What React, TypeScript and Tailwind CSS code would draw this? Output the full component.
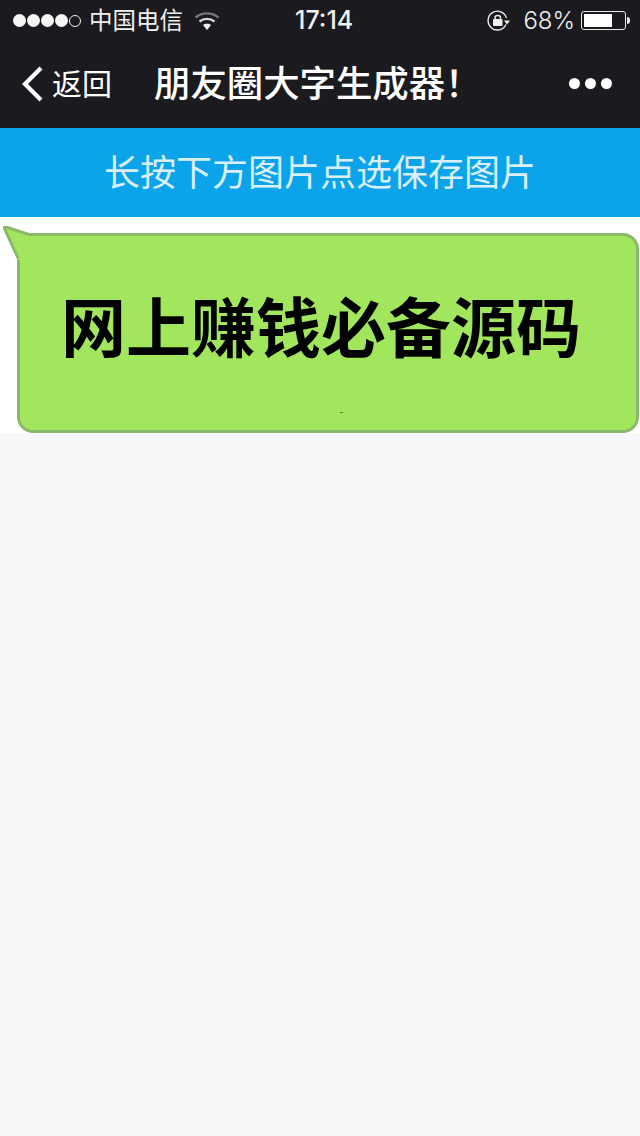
import React from 'react';

const cjk = "font-['Inter','Noto_Sans_CJK_SC',sans-serif]";

function Signal() {
  return (
    <div className="flex items-center gap-[1px]">
      {[0, 1, 2, 3].map((i) => (
        <span key={i} className="w-[13px] h-[13px] rounded-full bg-[#f4f4f4]" />
      ))}
      <span className="w-[12px] h-[12px] rounded-full border border-[#f4f4f4]" />
    </div>
  );
}

function Wifi() {
  return (
    <svg width="26" height="20" viewBox="0 0 26 20" fill="none">
      <path d="M1.5 6.5C8 1 18 1 24.5 6.5" stroke="#77777b" strokeWidth="2.4" />
      <path d="M5.5 10.5C10 7 16 7 20.5 10.5" stroke="#d8d8d8" strokeWidth="2.4" />
      <path d="M9 14C11 12.3 15 12.3 17 14L13 19Z" fill="#f4f4f4" />
    </svg>
  );
}

function RotationLock() {
  return (
    <svg width="24" height="22" viewBox="0 0 24 22" fill="none">
      <path d="M19.5 8A9.4 9.4 0 1 0 19 14.5" stroke="#f0f0f0" strokeWidth="1.3" />
      <path d="M17 10.5H23L20 14.5Z" fill="#f0f0f0" />
      <rect x="6" y="9" width="9.5" height="7" rx="1" fill="#f0f0f0" />
      <path d="M8 9V7.5C8 4.8 13.5 4.8 13.5 7.5V9" stroke="#f0f0f0" strokeWidth="1.5" />
    </svg>
  );
}

function Battery() {
  return (
    <div className="flex items-center">
      <div className="w-[45px] h-[19px] rounded-[3px] border border-[#e8e8e8] p-[2px]">
        <div className="w-[28px] h-full bg-white" />
      </div>
      <div className="w-[3px] h-[7px] ml-[1px] rounded-r-sm bg-[#e8e8e8]" />
    </div>
  );
}

export default function App() {
  return (
    <div className={`w-[640px] h-[1136px] overflow-hidden flex flex-col bg-[#f8f8fa] ${cjk}`}>
      <div className="h-[128px] bg-[#1b1a1f] text-white flex flex-col">
        <div className="h-[41px] flex items-center pl-[13px] pr-[10px] text-[#f0f0f0]">
          <div className="w-[282px] flex items-center">
            <Signal />
            <span className="ml-[8px] text-[23.5px] leading-none whitespace-nowrap">中国电信</span>
            <span className="ml-[11px]"><Wifi /></span>
          </div>
          <span className="text-[25px] font-medium leading-none">17:14</span>
          <div className="ml-auto flex items-center">
            <RotationLock />
            <span className="ml-[12px] mr-[6px] text-[24px] leading-none font-light">68%</span>
            <Battery />
          </div>
        </div>
        <div className="flex-1 flex items-center pb-[1px] relative">
          <svg className="ml-[21px] shrink-0" width="24" height="36" viewBox="0 0 24 36" fill="none">
            <path d="M20 2L4 18L20 34" stroke="#fff" strokeWidth="4.2" />
          </svg>
          <span className="ml-[7px] text-[30px] leading-none w-[102px] shrink-0 whitespace-nowrap">返回</span>
          <span className="text-[36.4px] font-medium leading-none whitespace-nowrap">朋友圈大字生成器！</span>
          <div className="absolute right-[28px] top-[37px] flex gap-[5px]">
            <span className="w-[11px] h-[11px] rounded-full bg-white" />
            <span className="w-[11px] h-[11px] rounded-full bg-white" />
            <span className="w-[11px] h-[11px] rounded-full bg-white" />
          </div>
        </div>
      </div>

      <div className="h-[89px] bg-[#0ba3ea] flex items-center justify-center text-[36px] leading-none text-[#d9f0fb] whitespace-nowrap">
        长按下方图片点选保存图片
      </div>

      <div className="h-[216px] bg-white pt-[16px] pl-[17px] pr-[1px]">
        <div className="relative h-[200px] rounded-[16px] border-[3px] border-[#8bb96c] bg-[#a2e65e] flex items-center justify-center pb-[9px] pr-[14px]">
          <svg className="absolute left-[-17px] top-[-10px]" width="40" height="34" viewBox="0 0 40 34">
            <path d="M15 32L1.5 2.5Q1 0.5 3 1L26 8.5H40V34H15Z" fill="#a2e65e" />
            <path d="M15 32L1.5 2.5Q1 0.5 3 1L26 8.5H40" fill="none" stroke="#8bb96c" strokeWidth="3" />
          </svg>
          <span className="relative text-[65px] leading-none font-bold text-black whitespace-nowrap">网上赚钱必备源码</span>
          <span className="absolute left-[320px] top-[176px] w-[3px] h-[1px] bg-[#3c8a1c]" />
        </div>
      </div>
    </div>
  );
}
